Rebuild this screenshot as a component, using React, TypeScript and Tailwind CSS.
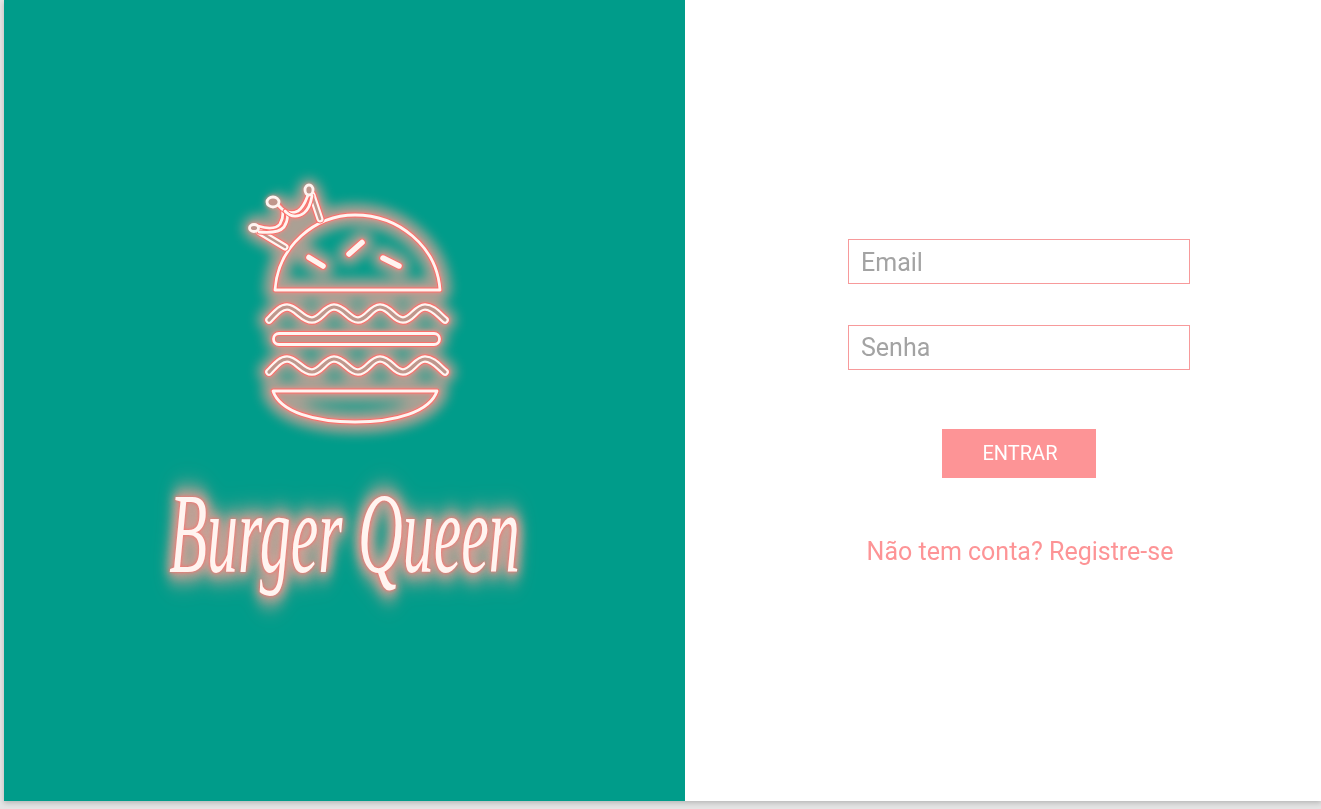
import React from "react";

const wave = (o: number) =>
  `M269 ${320 + o} C275 ${314 + o} 280 ${307 + o} 287 ${307 + o} C296 ${307 + o} 302 ${320 + o} 312 ${320 + o} C321 ${320 + o} 325 ${307 + o} 334 ${307 + o} C344 ${307 + o} 349 ${320 + o} 358 ${320 + o} C367 ${320 + o} 371 ${307 + o} 380 ${307 + o} C390 ${307 + o} 394 ${320 + o} 403 ${320 + o} C412 ${320 + o} 416 ${307 + o} 425 ${307 + o} C433 ${307 + o} 439 ${315 + o} 445 ${320 + o}`;

const Band = ({ d, w = 7.6 }: { d: string; w?: number }) => (
  <>
    <path d={d} fill="none" stroke="#fb6f6b" strokeWidth={w + 2} strokeLinecap="round" strokeLinejoin="round" />
    <path d={d} fill="none" stroke="#fff4f0" strokeWidth={w} strokeLinecap="round" strokeLinejoin="round" />
    <path d={d} fill="none" stroke="#c0968c" strokeWidth={w - 4.4} strokeLinecap="round" strokeLinejoin="round" />
  </>
);

const Line = ({ d, w = 2.8 }: { d: string; w?: number }) => (
  <>
    <path d={d} fill="none" stroke="#fb6f6b" strokeWidth={w + 2} strokeLinecap="round" strokeLinejoin="round" />
    <path d={d} fill="none" stroke="#fff4f0" strokeWidth={w} strokeLinecap="round" strokeLinejoin="round" />
  </>
);

const dome = "M275 290 C278 246 315 215 355 215 C398 215 437 246 440 290 Z";
const bun = "M273 391 H437 C430 412 395 422 355 422 C315 422 280 412 273 391 Z";
const crown = [
  "M258 226 C268 229 276 229 280 224 C284 217 284 209 279 205",
  "M259 232 C269 233 279 233 284 227 C289 219 288 213 284 210",
  "M279 206 C285 213 292 214 298 211 C304 207 306 200 308 195",
  "M285 211 C291 218 299 217 304 213 C309 209 311 202 312 196",
];
const glowPaths = [
  dome,
  bun,
  wave(0),
  wave(52),
  "M276 339 H437",
  "M309 257.5 L323 266",
  "M349 254 L362 242.5",
  "M383 258 L399 266",
  "M254 228 L285 247",
  "M309 190 L320 219",
  ...crown,
];

function Burger() {
  return (
    <svg viewBox="225 170 240 270" className="block h-[270px] w-[240px] overflow-visible">
      <g className="blur-[6px]" fill="none" stroke="#c9a196" strokeWidth="22" strokeLinecap="round" strokeLinejoin="round" opacity="0.85">
        {glowPaths.map((d) => (
          <path key={d} d={d} />
        ))}
      </g>
      <g className="[filter:drop-shadow(0_0_2px_#f58a84)]">
        <Line d={dome} />
        <Line d={bun} />
        <Line d="M309 257.5 L323 266" w={5.5} />
        <Line d="M349 254 L362 242.5" w={5.5} />
        <Line d="M383 258 L399 266" w={5.5} />
        <Band d={wave(0)} />
        <Band d={wave(52)} />
        <rect x="273.5" y="333.5" width="166" height="11" rx="5.5" fill="#c0968c" stroke="#fb6f6b" strokeWidth="4.8" />
        <rect x="273.5" y="333.5" width="166" height="11" rx="5.5" fill="none" stroke="#fff4f0" strokeWidth="2.8" />
        <Band d="M260 232 L285 247" w={7} />
        <Band d="M312 195 L320 219" w={7} />
        {crown.map((d) => (
          <Line key={d} d={d} />
        ))}
        <ellipse cx="254" cy="228" rx="4.5" ry="3.5" fill="#c0968c" stroke="#fff4f0" strokeWidth="2.8" />
        <ellipse cx="273" cy="202" rx="6" ry="5" fill="#c0968c" stroke="#fff4f0" strokeWidth="2.8" />
        <ellipse cx="309" cy="190" rx="4" ry="5" fill="#c0968c" stroke="#fff4f0" strokeWidth="2.8" />
      </g>
    </svg>
  );
}

export default function App() {
  return (
    <div className="min-h-[809px] bg-[#e4e4e4] pl-1 font-['Roboto',sans-serif]">
      <main className="flex h-[801px] bg-white shadow-[0_2px_5px_rgba(0,0,0,0.2)]">
        <section className="flex w-[681px] flex-col items-center justify-center bg-[#009c8a] pb-[33px]">
          <Burger />
          <span className="mt-[28px] block scale-y-[1.85] whitespace-nowrap font-['Liberation_Serif',serif] text-[62px] italic leading-[130px] text-[#fff4f0] [filter:drop-shadow(0_0_5px_#c9a196)_drop-shadow(0_0_6px_#c9a196)] [text-shadow:0_0_1px_#fb6f6b,0_0_3px_#fb6f6b,0_0_8px_#d2a398]">
            Burger Queen
          </span>
        </section>
        <section className="flex flex-1 flex-col items-center justify-center pl-8 pt-1">
          <form className="flex flex-col items-center [will-change:opacity]">
            <input
              placeholder="Email"
              className="h-[45px] w-[342px] border border-[#f79a9b] px-3 pt-0.5 text-[25px] outline-none placeholder:text-[#a3a3a3]"
            />
            <input
              placeholder="Senha"
              type="password"
              className="mt-[41px] h-[45px] w-[342px] border border-[#f79a9b] px-3 text-[25px] outline-none placeholder:text-[#a3a3a3]"
            />
            <button type="button" className="mt-[59px] h-[49px] w-[154px] bg-[#fd9496] pl-0.5 text-xl text-white">
              ENTRAR
            </button>
            <a className="mt-[59px] pl-0.5 text-[25px] leading-[30px] text-[#fd9496]">Não tem conta? Registre-se</a>
          </form>
        </section>
      </main>
    </div>
  );
}
